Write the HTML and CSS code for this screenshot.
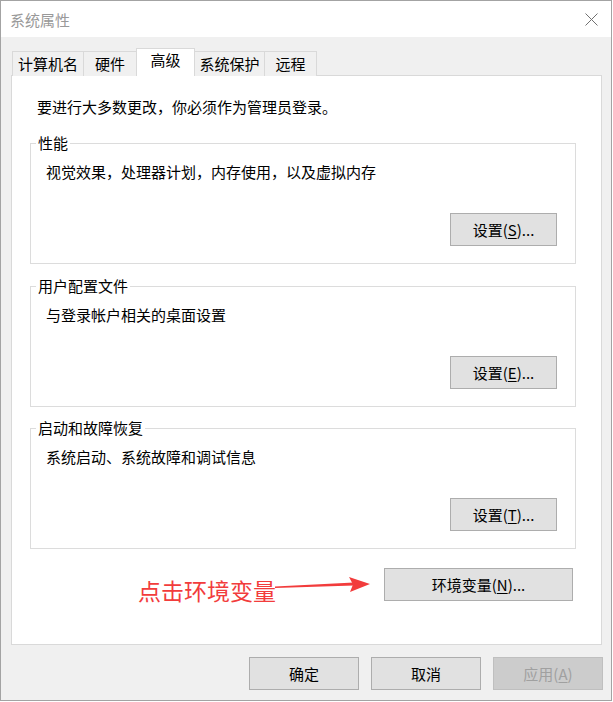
FILE: index.html
```html
<!DOCTYPE html>
<html lang="zh-CN">
<head>
<meta charset="utf-8">
<title>系统属性</title>
<link rel="stylesheet" href="styles.css">
</head>
<body>
<div class="window">
  <div class="titlebar">
    <span class="title">系统属性</span>
    <span class="close">
      <svg width="13" height="13" viewBox="0 0 13 13"><path d="M0.5 0.5 L12.5 12.5 M12.5 0.5 L0.5 12.5" stroke="#707070" stroke-width="1" fill="none"/></svg>
    </span>
  </div>
  <div class="body">
    <div class="tabs">
      <div class="tab t1">计算机名</div>
      <div class="tab t2">硬件</div>
      <div class="tab t3 active">高级</div>
      <div class="tab t4">系统保护</div>
      <div class="tab t5">远程</div>
    </div>
    <div class="panel">
      <p class="intro">要进行大多数更改，你必须作为管理员登录。</p>
      <fieldset class="group">
        <legend>性能</legend>
        <p class="desc">视觉效果，处理器计划，内存使用，以及虚拟内存</p>
        <div class="btnrow"><button class="btn setbtn">设置(<u>S</u>)...</button></div>
      </fieldset>
      <fieldset class="group g2">
        <legend>用户配置文件</legend>
        <p class="desc">与登录帐户相关的桌面设置</p>
        <div class="btnrow"><button class="btn setbtn">设置(<u>E</u>)...</button></div>
      </fieldset>
      <fieldset class="group g3">
        <legend>启动和故障恢复</legend>
        <p class="desc">系统启动、系统故障和调试信息</p>
        <div class="btnrow"><button class="btn setbtn">设置(<u>T</u>)...</button></div>
      </fieldset>
      <div class="envrow">
        <span class="note">点击环境变量</span>
        <svg class="arrow" width="100" height="20" viewBox="0 0 100 20">
          <polygon points="3,11.5 82,7.5 82,10.5 3,13" fill="#f23c3c"/>
          <polygon points="77,2 98,9 78,17 81,9.5" fill="#f23c3c"/>
        </svg>
        <button class="btn envbtn">环境变量(<u>N</u>)...</button>
      </div>
    </div>
    <div class="footer">
      <button class="btn fbtn">确定</button>
      <button class="btn fbtn">取消</button>
      <button class="btn fbtn disabled">应用(<u>A</u>)</button>
    </div>
  </div>
</div>
</body>
</html>
```
FILE: styles.css
```css
html, body {
  margin: 0;
  padding: 0;
  background: #ffffff;
}
body {
  font-family: "Noto Sans CJK SC", "Microsoft YaHei", sans-serif;
  font-size: 15px;
  line-height: 20px;
  color: #000;
}
.window {
  box-sizing: border-box;
  width: 612px;
  height: 701px;
  border: 1px solid #a3a3a3;
  background: #f0f0f0;
  display: flex;
  flex-direction: column;
}
.titlebar {
  height: 36px;
  background: #fff;
  display: flex;
  align-items: center;
  justify-content: space-between;
  padding: 0 13px 0 9px;
}
.title {
  color: #999;
  font-size: 15px;
  margin-top: 2px;
}
.close {
  display: flex;
  width: 13px;
  height: 13px;
  margin-top: 1px;
}
.body {
  display: flex;
  flex-direction: column;
  padding: 0 9px 10px 10px;
  flex: 1;
}
.tabs {
  display: flex;
  align-items: flex-end;
  margin-top: 11px;
  height: 28px;
  padding-left: 1px;
  position: relative;
  z-index: 1;
  margin-bottom: -1px;
}
.tab {
  box-sizing: border-box;
  height: 25px;
  border: 1px solid #d9d9d9;
  border-bottom: none;
  background: #f0f0f0;
  margin-left: -1px;
  padding-top: 2px;
  white-space: nowrap;
  text-align: center;
}
.t1 { width: 72px; margin-left: 0; }
.t2 { width: 54px; }
.t3 { width: 59px; }
.t4 { width: 71px; }
.t5 { width: 53px; }
.tab.active {
  height: 28px;
  background: #fff;
  padding-top: 1px;
}
.panel {
  box-sizing: border-box;
  height: 570px;
  border: 1px solid #d9d9d9;
  background: #fff;
  padding: 21px 25px 43px 18px;
  display: flex;
  flex-direction: column;
}
.intro {
  margin: 0 0 16px 7px;
}
.group {
  margin: 0;
  border: 1px solid #dcdcdc;
  padding: 0 18px 17px 15px;
  min-width: 0;
}
.group legend {
  padding: 0 2px;
  margin-left: -10px;
  line-height: 20px;
}
.g2 { margin-top: 12px; }
.g3 { margin-top: 11px; }
.desc {
  margin: 9px 0 0 0;
}
.btnrow {
  display: flex;
  justify-content: flex-end;
  margin-top: 31px;
}
.btn {
  box-sizing: border-box;
  height: 33px;
  border: 1px solid #adadad;
  background: #e1e1e1;
  font-family: inherit;
  font-size: 15px;
  line-height: 20px;
  color: #000;
  padding: 0;
  margin: 0;
}
.btn u {
  text-decoration-thickness: 1px;
  text-underline-offset: 2px;
}
.setbtn {
  width: 107px;
}
.envrow {
  position: relative;
  display: flex;
  justify-content: flex-end;
  margin-top: 19px;
  padding-right: 3px;
}
.envbtn {
  width: 189px;
}
.note {
  position: absolute;
  left: 108px;
  top: 11px;
  font-size: 23px;
  line-height: 23px;
  color: #f23c3c;
  white-space: nowrap;
}
.arrow {
  position: absolute;
  left: 242px;
  top: 7px;
}
.footer {
  display: flex;
  justify-content: flex-end;
  gap: 12px;
  margin-top: 12px;
  margin-right: -1px;
}
.fbtn {
  width: 110px;
}
.fbtn.disabled {
  background: #cccccc;
  border-color: #bfbfbf;
  color: #a0a0a0;
}
```
